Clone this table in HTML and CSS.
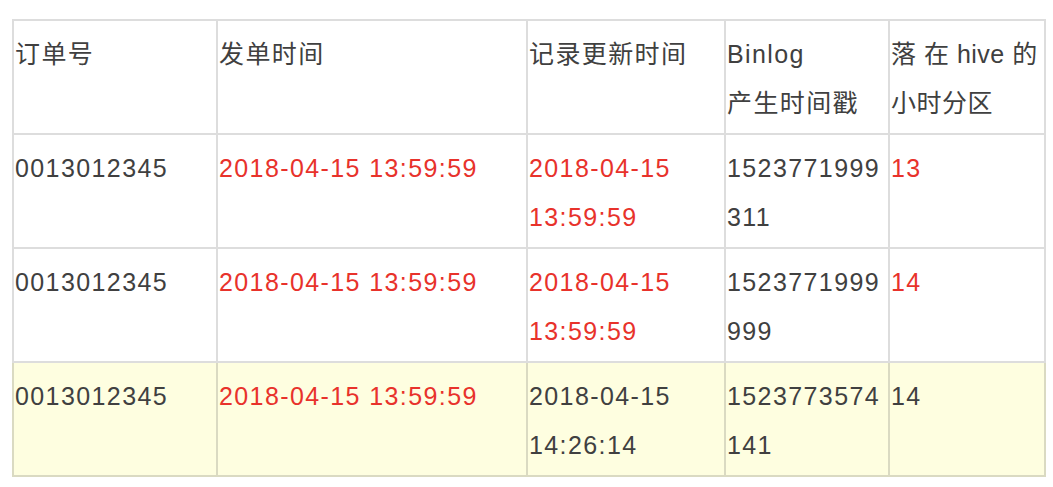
FILE: index.html
```html
<!DOCTYPE html>
<html>
<head>
  <title>Binlog 分区示例</title>
  <link rel="stylesheet" href="styles.css">
</head>
<body>
  <table class="data-table">
    <colgroup>
      <col class="col-order">
      <col class="col-send">
      <col class="col-update">
      <col class="col-binlog">
      <col class="col-hour">
    </colgroup>
    <thead>
      <tr>
        <th>订单号</th>
        <th>发单时间</th>
        <th>记录更新时间</th>
        <th>Binlog<br>产生时间戳</th>
        <th class="nowrap">落 在 hive 的<br>小时分区</th>
      </tr>
    </thead>
    <tbody>
      <tr>
        <td>0013012345</td>
        <td class="red">2018-04-15 13:59:59</td>
        <td class="red">2018-04-15 13:59:59</td>
        <td class="num">1523771999311</td>
        <td class="red">13</td>
      </tr>
      <tr>
        <td>0013012345</td>
        <td class="red">2018-04-15 13:59:59</td>
        <td class="red">2018-04-15 13:59:59</td>
        <td class="num">1523771999999</td>
        <td class="red">14</td>
      </tr>
      <tr class="highlight">
        <td>0013012345</td>
        <td class="red">2018-04-15 13:59:59</td>
        <td>2018-04-15 14:26:14</td>
        <td class="num">1523773574141</td>
        <td>14</td>
      </tr>
    </tbody>
  </table>
</body>
</html>
```

FILE: styles.css
```css
body {
  margin: 0;
  background: #fff;
  font-family: "Liberation Sans", "Noto Sans CJK SC", sans-serif;
  color: #404040;
}

.data-table {
  margin: 19px 0 0 12px;
  border-collapse: collapse;
  table-layout: fixed;
  width: 1032px;
  font-size: 25px;
  letter-spacing: 1.4px;
  line-height: 49px;
}

.col-order { width: 204px; }
.col-send { width: 310px; }
.col-update { width: 198px; }
.col-binlog { width: 164px; }
.col-hour { width: 156px; }

.data-table th,
.data-table td {
  border: 2px solid #dddddd;
  padding: 9px 1px 5px 1px;
  text-align: left;
  vertical-align: top;
  font-weight: normal;
}

.data-table th {
  height: 98px;
}

.data-table th.nowrap {
  white-space: nowrap;
  letter-spacing: 0.5px;
}

.data-table td.num {
  word-break: break-all;
}

.data-table .red {
  color: #e8322b;
}

.data-table tr.highlight td {
  background: #fefee0;
  border-color: #dadac2;
}
```
